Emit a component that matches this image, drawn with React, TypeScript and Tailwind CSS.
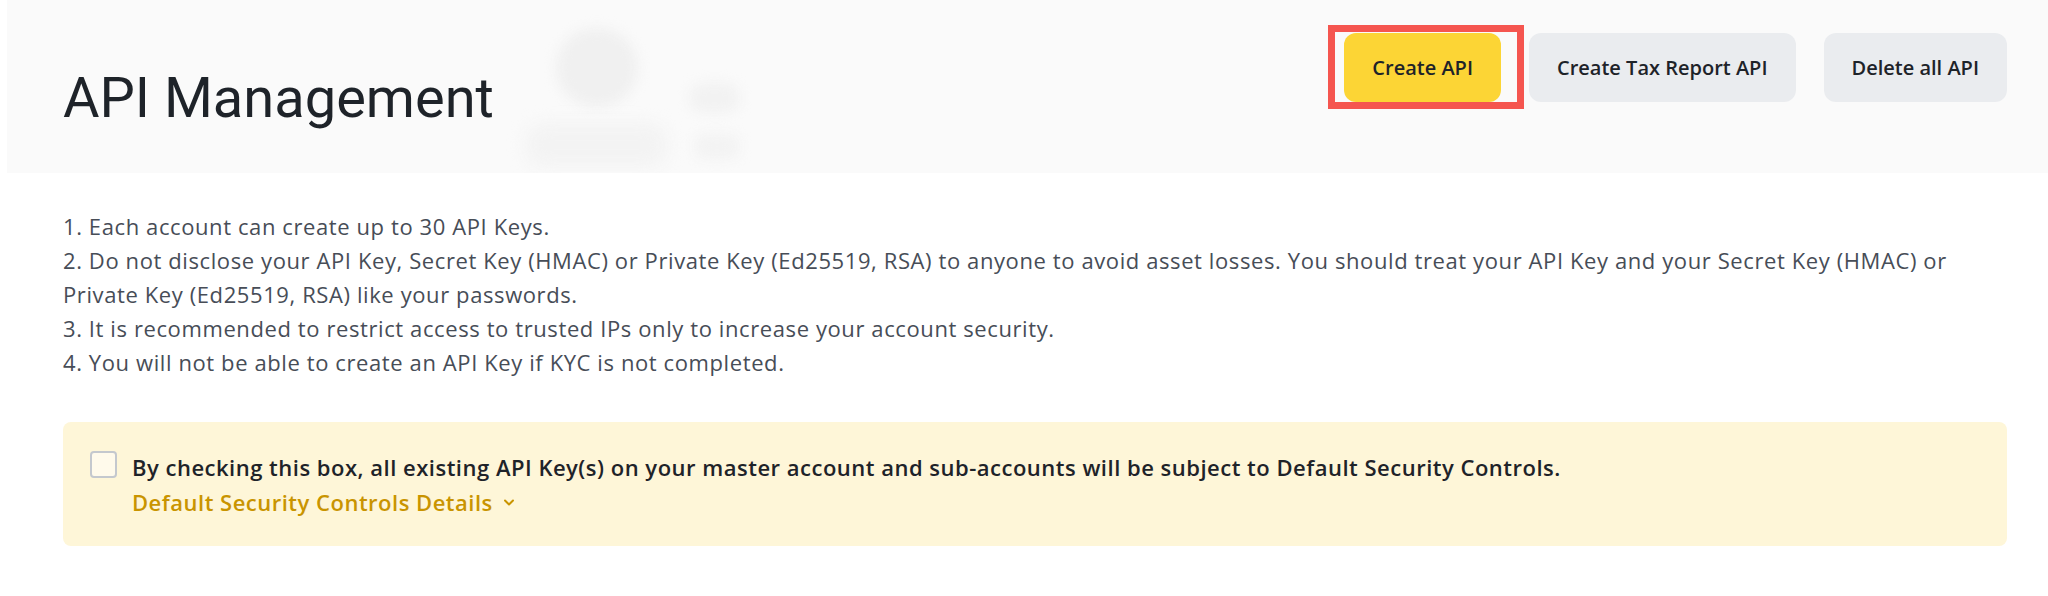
import React from "react";

function Btn({ children, yellow }: { children: React.ReactNode; yellow?: boolean }) {
  return (
    <button
      className={
        "h-[69px] px-[28px] rounded-[12px] text-[20px] font-semibold text-[#1e2329] leading-none font-['Open_Sans',sans-serif] " +
        (yellow ? "bg-[#fcd535]" : "bg-[#eaecef]")
      }
    >
      {children}
    </button>
  );
}

export default function App() {
  const items = [
    "1. Each account can create up to 30 API Keys.",
    "2. Do not disclose your API Key, Secret Key (HMAC) or Private Key (Ed25519, RSA) to anyone to avoid asset losses. You should treat your API Key and your Secret Key (HMAC) or Private Key (Ed25519, RSA) like your passwords.",
    "3. It is recommended to restrict access to trusted IPs only to increase your account security.",
    "4. You will not be able to create an API Key if KYC is not completed.",
  ];
  return (
    <div className="w-[2048px] h-[596px] bg-white overflow-hidden font-['Open_Sans',sans-serif]">
      <header className="ml-[7px] h-[173px] bg-[#fafafa] relative flex justify-between pl-[56px] pr-[41px] overflow-hidden">
        <div className="absolute left-[549px] top-[28px] w-[82px] h-[79px] rounded-full bg-[#f0f0f0] blur-[6px]" />
        <div className="absolute left-[682px] top-[83px] w-[51px] h-[30px] rounded-full bg-[#f2f2f2] blur-[6px]" />
        <div className="absolute left-[518px] top-[123px] w-[143px] h-[44px] rounded-[20px] bg-[#f3f3f3] blur-[8px]" />
        <div className="absolute left-[687px] top-[133px] w-[46px] h-[27px] rounded-full bg-[#f3f3f3] blur-[6px]" />
        <h1 className="relative mt-[70px] text-[56px] leading-[56px] font-normal text-[#1e2329] h-[56px] font-['Roboto',sans-serif]">
          API Management
        </h1>
        <div className="relative flex items-start gap-[28px] pt-[33px]">
          <div className="relative">
            <Btn yellow>Create API</Btn>
            <span className="absolute -left-[16px] -top-[8px] -right-[23px] -bottom-[7px] border-[7px] border-[#f5554f] pointer-events-none" />
          </div>
          <Btn>Create Tax Report API</Btn>
          <Btn>Delete all API</Btn>
        </div>
      </header>
      <main className="pl-[63px] pr-[41px]">
        <div className="mt-[36px] text-[22px] leading-[34px] tracking-[0.6px] text-[#474d57]">
          {items.map((t) => (
            <p key={t}>{t}</p>
          ))}
        </div>
        <div className="mt-[43px] h-[124px] rounded-[8px] bg-[#fef6d8] pl-[27px] pt-[28px] flex">
          <div className="mt-[1px] w-[27px] h-[27px] rounded-[4px] border-2 border-[#c4c8ce] bg-[#fffaeb] shrink-0" />
          <div className="ml-[15px] text-[22px] leading-[35px] tracking-[0.5px] font-semibold">
            <p className="text-[#1e2329]">
              By checking this box, all existing API Key(s) on your master account and sub-accounts will be subject to Default Security Controls.
            </p>
            <p className="text-[#c99400] flex items-center">
              Default Security Controls Details
              <svg className="ml-[11px]" width="10" height="7" viewBox="0 0 10 7" fill="none">
                <path d="M1 1.5l4 4 4-4" stroke="#c99400" strokeWidth="2" strokeLinecap="round" strokeLinejoin="round" />
              </svg>
            </p>
          </div>
        </div>
      </main>
    </div>
  );
}
